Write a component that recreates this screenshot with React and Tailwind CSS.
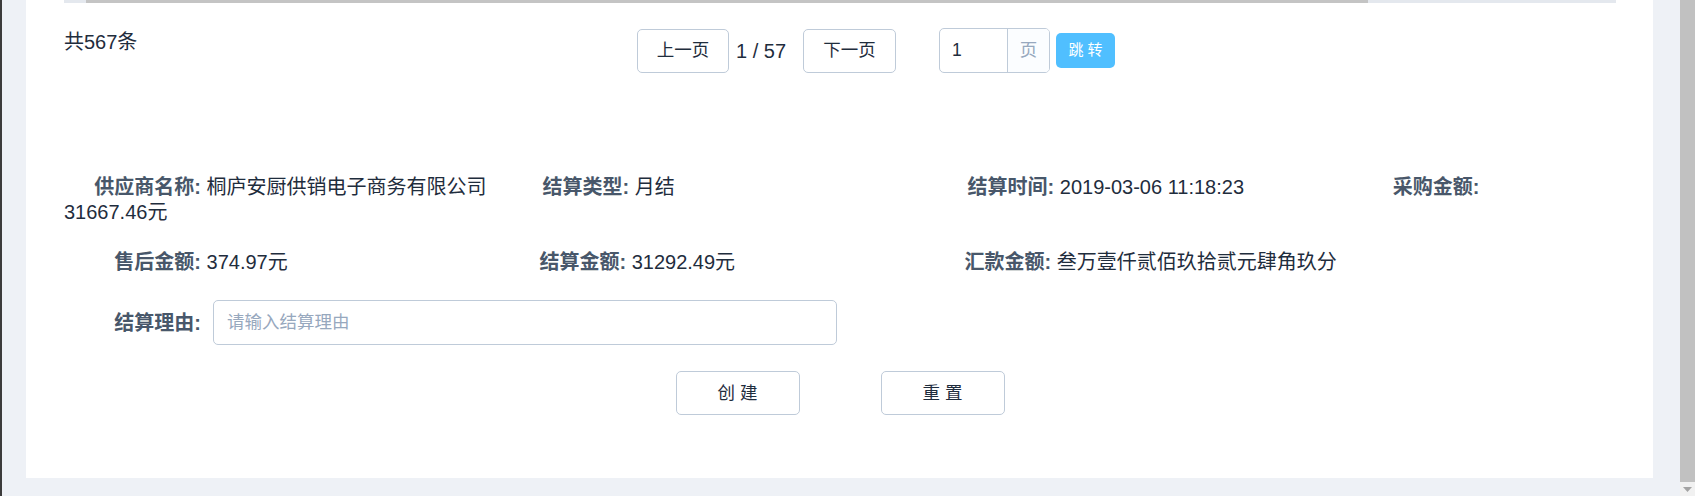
import React from "react";

function Item({ label, value }) {
  return (
    <>
      <span className="inline-block w-[137px] text-right font-bold text-[#48576a]">{label}</span>{" "}
      <span className="inline-block min-w-[277px] text-[#1f2d3d]">{value}</span>{" "}
    </>
  );
}

export default function App() {
  return (
    <div className="flex h-[496px] w-full overflow-hidden font-['Liberation_Sans','Noto_Sans_CJK_SC',sans-serif]">
      <div className="w-[2px] bg-[#3c3c3c]" />
      <div className="flex flex-1 flex-col bg-[#eef1f6] pl-[24px] pr-[27px] pb-[18px]">
        <div className="flex flex-1 flex-col bg-white pl-[38px] pr-[37px]">
          {/* bottom of the table scrollbar */}
          <div className="h-[3px] bg-[#e4e8ee]">
            <div className="ml-[22px] h-[3px] w-[1282px] bg-[#c4c4c4]" />
          </div>

          {/* pagination */}
          <div className="mt-[25px] flex h-[45px] items-center">
            <div className="w-[573px] self-start pt-[3px] text-[20px] leading-[22px] text-[#1f2d3d]">共567条</div>
            <button className="h-[44px] w-[92px] rounded-[5px] border border-[#bfcbd9] bg-white text-[17.5px] text-[#1f2d3d]">
              上一页
            </button>
            <span className="ml-[7px] mr-[17px] text-[20px] text-[#1f2d3d]">1 / 57</span>
            <button className="h-[44px] w-[93px] rounded-[5px] border border-[#bfcbd9] bg-white text-[17.5px] text-[#1f2d3d]">
              下一页
            </button>
            <div className="ml-[43px] flex h-[45px] w-[111px] overflow-hidden rounded-[5px] border border-[#bfcbd9]">
              <input
                defaultValue="1"
                className="w-[67px] pl-[12px] text-[17.5px] text-[#1f2d3d] outline-none"
              />
              <div className="flex flex-1 items-center justify-center border-l border-[#bfcbd9] bg-[#fbfdff] text-[17.5px] text-[#97a8be]">
                页
              </div>
            </div>
            <button className="ml-[6px] h-[35px] w-[59px] rounded-[5px] bg-[#50bfff] text-[15px] text-white">
              跳 转
            </button>
          </div>

          {/* info */}
          <div className="mt-[102px] text-[20px] leading-[25px]">
            <div>
              <Item label="供应商名称:" value="桐庐安厨供销电子商务有限公司" />
              <Item label="结算类型:" value="月结" />
              <Item label="结算时间:" value="2019-03-06 11:18:23" />
              <Item label="采购金额:" value="31667.46元" />
            </div>
            <div className="mt-[25px]">
              <Item label="售后金额:" value="374.97元" />
              <Item label="结算金额:" value="31292.49元" />
              <Item label="汇款金额:" value="叁万壹仟贰佰玖拾贰元肆角玖分" />
            </div>
          </div>

          <div className="mt-[25px] flex items-center">
            <span className="w-[137px] text-right text-[20px] font-bold text-[#48576a]">结算理由:</span>
            <input
              placeholder="请输入结算理由"
              className="ml-[12px] h-[45px] w-[624px] rounded-[5px] border border-[#bfcbd9] px-[13px] text-[17.5px] text-[#1f2d3d] outline-none placeholder:text-[#97a8be]"
            />
          </div>

          <div className="mt-[26px] flex justify-center gap-[81px]">
            <button className="h-[44px] w-[124px] rounded-[5px] border border-[#bfcbd9] bg-white text-[17.5px] text-[#1f2d3d]">
              创 建
            </button>
            <button className="h-[44px] w-[124px] rounded-[5px] border border-[#bfcbd9] bg-white text-[17.5px] text-[#1f2d3d]">
              重 置
            </button>
          </div>
        </div>
      </div>

      {/* window scrollbar */}
      <div className="flex w-[15px] flex-col bg-[#f1f1f1]">
        <div className="h-[482px] bg-[#c1c1c1]" />
        <div className="flex flex-1 items-center justify-center">
          <svg width="9" height="5" viewBox="0 0 9 5">
            <path d="M0 0h9L4.5 5z" fill="#a3a3a3" />
          </svg>
        </div>
      </div>
    </div>
  );
}
